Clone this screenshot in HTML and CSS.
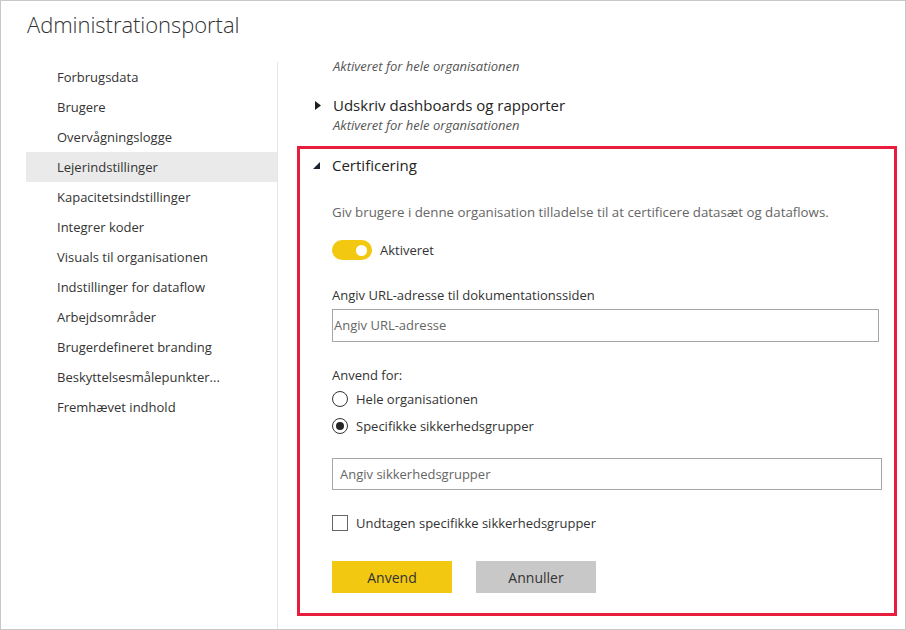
FILE: index.html
```html
<!DOCTYPE html>
<html lang="da">
<head>
<meta charset="utf-8">
<title>Administrationsportal</title>
<link rel="stylesheet" href="styles.css">
</head>
<body>
<div class="frame">
  <h1 class="title">Administrationsportal</h1>
  <div class="layout">
    <nav class="sidebar">
      <div class="nav-item">Forbrugsdata</div>
      <div class="nav-item">Brugere</div>
      <div class="nav-item">Overvågningslogge</div>
      <div class="nav-item active">Lejerindstillinger</div>
      <div class="nav-item">Kapacitetsindstillinger</div>
      <div class="nav-item">Integrer koder</div>
      <div class="nav-item">Visuals til organisationen</div>
      <div class="nav-item">Indstillinger for dataflow</div>
      <div class="nav-item">Arbejdsområder</div>
      <div class="nav-item">Brugerdefineret branding</div>
      <div class="nav-item">Beskyttelsesmålepunkter...</div>
      <div class="nav-item">Fremhævet indhold</div>
    </nav>
    <main class="content">
      <div class="scroller">
        <div class="setting setting-partial">
          <div class="setting-sub">Aktiveret for hele organisationen</div>
        </div>
        <div class="setting">
          <div class="setting-head">
            <svg class="caret" width="6" height="9" viewBox="0 0 6 9"><path d="M0 0 L6 4.5 L0 9 Z" fill="#1f1f1f"/></svg>
            <span class="setting-title">Udskriv dashboards og rapporter</span>
          </div>
          <div class="setting-sub">Aktiveret for hele organisationen</div>
        </div>
        <section class="setting-open">
          <div class="setting-head">
            <svg class="caret-open" width="7" height="7" viewBox="0 0 7 7"><path d="M7 0 L7 7 L0 7 Z" fill="#1c2230"/></svg>
            <span class="setting-title">Certificering</span>
          </div>
          <p class="desc">Giv brugere i denne organisation tilladelse til at certificere datasæt og dataflows.</p>
          <div class="toggle-row">
            <span class="toggle"><span class="knob"></span></span>
            <span class="toggle-label">Aktiveret</span>
          </div>
          <div class="field-label">Angiv URL-adresse til dokumentationssiden</div>
          <div class="input input-url">Angiv URL-adresse</div>
          <div class="field-label apply-label">Anvend for:</div>
          <div class="radio-row first"><span class="radio"></span><span>Hele organisationen</span></div>
          <div class="radio-row"><span class="radio checked"></span><span>Specifikke sikkerhedsgrupper</span></div>
          <div class="input input-groups">Angiv sikkerhedsgrupper</div>
          <div class="check-row"><span class="checkbox"></span><span>Undtagen specifikke sikkerhedsgrupper</span></div>
          <div class="buttons">
            <button class="btn btn-primary">Anvend</button>
            <button class="btn btn-secondary">Annuller</button>
          </div>
        </section>
      </div>
    </main>
  </div>
</div>
</body>
</html>
```
FILE: styles.css
```css
* { box-sizing: border-box; }
html, body { margin: 0; padding: 0; background: #fff; }
body {
  font-family: "Segoe UI", "Open Sans", "Noto Sans", sans-serif;
  color: #333;
}
.frame {
  width: 906px;
  height: 630px;
  border: 1px solid #c8c8c8;
  overflow: hidden;
  display: flex;
  flex-direction: column;
}
.title {
  margin: 0;
  padding: 8px 0 0 26px;
  height: 61px;
  font-size: 22px;
  font-weight: 300;
  color: #333;
  letter-spacing: -0.05px;
}
.layout {
  flex: 1;
  display: flex;
  min-height: 0;
}
.sidebar {
  width: 277px;
  padding-left: 25px;
  border-right: 1px solid #e6e6e6;
}
.nav-item {
  height: 30px;
  line-height: 30px;
  padding-left: 31px;
  font-size: 13px;
  color: #333;
  white-space: nowrap;
}
.nav-item.active { background: #eaeaea; }
.content {
  flex: 1;
}
.scroller {
  margin-top: -6px;
  padding-left: 19px;
}
.setting {
  padding-left: 18px;
  margin-bottom: 11px;
}
.setting-partial { margin-bottom: 19px; }
.setting-head {
  display: flex;
  align-items: center;
  height: 20px;
}
.caret { margin-right: 12px; }
.setting-title {
  font-size: 15px;
  color: #252423;
  white-space: nowrap;
}
.setting-sub {
  height: 20px;
  line-height: 20px;
  font-size: 13px;
  font-style: italic;
  color: #555;
  padding-left: 18px;
}
.setting-open {
  width: 600px;
  height: 470px;
  border: 3px solid #e81c3c;
  padding: 6px 0 0 32px;
}
.setting-open .setting-head { margin-left: -19px; }
.caret-open { margin-right: 12px; }
.desc {
  margin: 27px 0 0;
  line-height: 20px;
  font-size: 13.3px;
  color: #666;
  white-space: nowrap;
}
.toggle-row {
  margin-top: 18px;
  display: flex;
  align-items: center;
  height: 20px;
}
.toggle {
  width: 40px;
  height: 20px;
  border-radius: 10px;
  background: #f2c811;
  display: flex;
  align-items: center;
  justify-content: flex-end;
  padding-right: 5px;
}
.knob {
  width: 11px;
  height: 11px;
  border-radius: 50%;
  background: #fff;
}
.toggle-label {
  margin-left: 8px;
  font-size: 13px;
  color: #333;
}
.field-label {
  margin-top: 25px;
  line-height: 20px;
  font-size: 13px;
  color: #333;
}
.apply-label { margin-top: 23px; }
.input {
  margin-top: 4px;
  height: 33px;
  line-height: 31px;
  border: 1px solid #a6a6a6;
  padding-left: 1px;
  font-size: 13px;
  color: #666;
}
.input-url { width: 547px; }
.input-groups {
  width: 550px;
  height: 32px;
  line-height: 30px;
  margin-top: 22px;
  padding-left: 7px;
}
.radio-row, .check-row {
  display: flex;
  align-items: center;
  height: 20px;
  font-size: 13px;
  color: #333;
  margin-top: 7px;
}
.radio-row.first { margin-top: 4px; }
.radio {
  width: 16px;
  height: 16px;
  border: 1px solid #333;
  border-radius: 50%;
  margin-right: 8px;
  display: flex;
  align-items: center;
  justify-content: center;
}
.radio.checked::after {
  content: "";
  width: 8px;
  height: 8px;
  border-radius: 50%;
  background: #252423;
}
.check-row { margin-top: 23px; }
.checkbox {
  width: 16px;
  height: 16px;
  border: 1px solid #666;
  margin-right: 8px;
}
.buttons {
  margin-top: 28px;
  display: flex;
  gap: 24px;
}
.btn {
  width: 120px;
  height: 32px;
  border: none;
  font-family: inherit;
  font-size: 14px;
  color: #333;
  padding: 0;
}
.btn-primary { background: #f2c811; }
.btn-secondary { background: #c8c8c8; }
```
